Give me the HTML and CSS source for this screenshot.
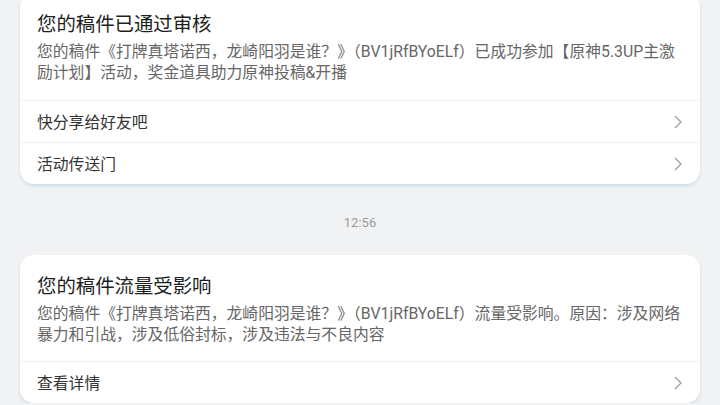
FILE: index.html
```html
<!DOCTYPE html>
<html lang="zh-CN">
<head>
    <meta charset="UTF-8">
    <title>消息</title>
    <link rel="stylesheet" href="styles.css">
</head>
<body>
    <div class="feed">
        <!-- 审核通过 -->
        <div class="card">
            <div class="card-head">
                <div class="title">您的稿件已通过审核</div>
                <div class="desc">您的稿件《打牌真塔诺西，龙崎阳羽是谁？》（BV1jRfBYoELf）已成功参加【原神5.3UP主激励计划】活动，奖金道具助力原神投稿&amp;开播</div>
            </div>
            <div class="row">
                <span>快分享给好友吧</span>
                <svg class="arrow" width="8" height="14" viewBox="0 0 8 14"><path d="M1 1l6 6-6 6" fill="none" stroke="#9a9a9a" stroke-width="1.2"/></svg>
            </div>
            <div class="row">
                <span>活动传送门</span>
                <svg class="arrow" width="8" height="14" viewBox="0 0 8 14"><path d="M1 1l6 6-6 6" fill="none" stroke="#9a9a9a" stroke-width="1.2"/></svg>
            </div>
        </div>

        <div class="time">12:56</div>

        <!-- 流量受影响 -->
        <div class="card">
            <div class="card-head">
                <div class="title">您的稿件流量受影响</div>
                <div class="desc">您的稿件《打牌真塔诺西，龙崎阳羽是谁？》（BV1jRfBYoELf）流量受影响。原因：涉及网络暴力和引战，涉及低俗封标，涉及违法与不良内容</div>
            </div>
            <div class="row">
                <span>查看详情</span>
                <svg class="arrow" width="8" height="14" viewBox="0 0 8 14"><path d="M1 1l6 6-6 6" fill="none" stroke="#9a9a9a" stroke-width="1.2"/></svg>
            </div>
        </div>
    </div>
</body>
</html>
```

FILE: styles.css
```css
body {
    margin: 0;
    background-color: #f1f2f4;
    font-family: Roboto, "Noto Sans CJK SC", sans-serif;
    overflow: hidden;
}
.feed {
    margin-top: -7px; /* 列表已滚动一点 */
    padding: 0 20px;
}
.card {
    background-color: #fff;
    border-radius: 14px;
    box-shadow: 0 2px 3px rgba(170, 205, 220, 0.5);
}
.card-head {
    padding: 19px 15px 17px 17px;
}
.title {
    font-size: 19.4px;
    line-height: 26px;
    color: #1e1e1e;
}
.desc {
    margin-top: 3px;
    font-size: 15.8px;
    line-height: 21px;
    color: #666;
}
.row {
    height: 41px;
    border-top: 1px solid #f0f0f0;
    padding: 0 17px;
    display: flex;
    justify-content: space-between;
    align-items: center;
    font-size: 15.8px;
    color: #333;
}
.arrow {
    margin-right: 1px;
}
.time {
    margin: 31px 0 24px;
    line-height: 16px;
    font-size: 13px;
    color: #9a9a9a;
    text-align: center;
}
.card + .time + .card .card-head {
    padding-bottom: 16px;
}
```
